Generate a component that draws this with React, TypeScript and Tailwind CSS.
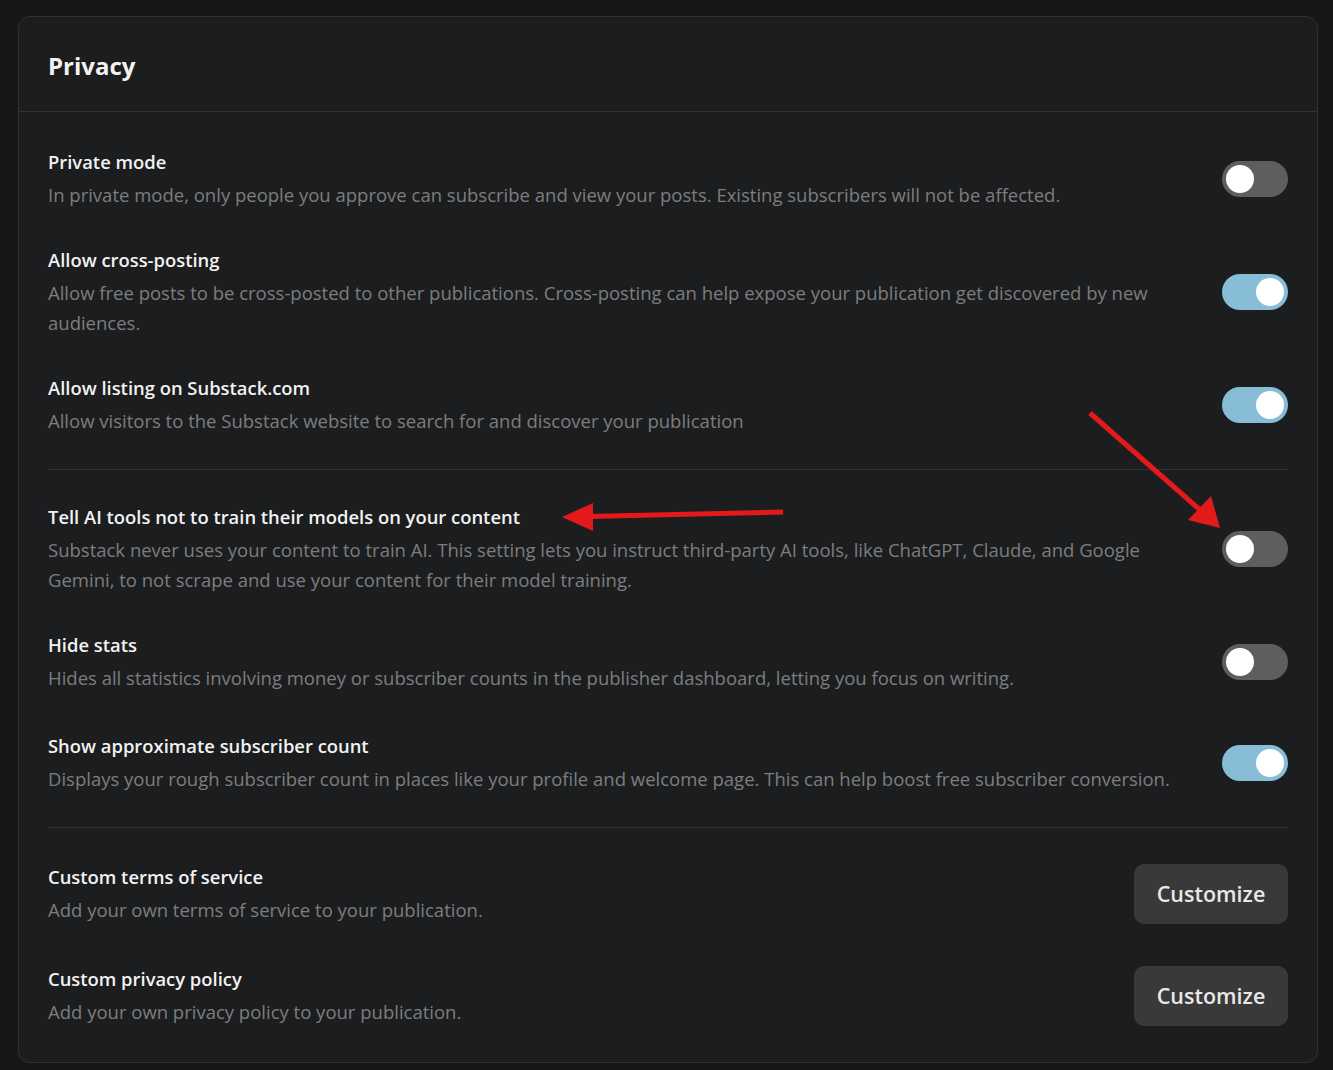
import React from "react";

type RowProps = {
  title: string;
  desc: string;
  control: React.ReactNode;
  extra?: string;
};

function Toggle({ on }: { on: boolean }) {
  return (
    <div
      className={
        on
          ? "relative h-[36px] w-[66px] shrink-0 rounded-full bg-[#87bdd6]"
          : "relative h-[36px] w-[66px] shrink-0 rounded-full bg-[#5d5e5d]"
      }
    >
      <div
        className={
          on
            ? "absolute right-[4px] top-[4px] h-[28px] w-[28px] rounded-full bg-white"
            : "absolute left-[4px] top-[4px] h-[28px] w-[28px] rounded-full bg-white"
        }
      />
    </div>
  );
}

function CustomizeButton() {
  return (
    <button className="h-[60px] w-[154px] shrink-0 rounded-[10px] bg-[#383938] text-[21.5px] font-semibold text-[#e8e8e8]">
      Customize
    </button>
  );
}

function Row({ title, desc, control, extra }: RowProps) {
  return (
    <div className={"flex items-center justify-between py-[18px] " + (extra ?? "")}>
      <div className="w-[1132px]">
        <div className="text-[18.4px] font-semibold leading-[28px] text-[#f2f2f2]">{title}</div>
        <div className="mt-[4px] text-[18.5px] leading-[30px] text-[#7c7d7e]">{desc}</div>
      </div>
      {control}
    </div>
  );
}

function Divider() {
  return <div className="h-px bg-[#313234]" />;
}

export default function App() {
  return (
    <div
      className="relative min-h-[1070px] w-[1333px] bg-[#161719] pl-[18px] pt-[16px]"
      style={{ fontFamily: '"Open Sans", "Noto Sans", sans-serif' }}
    >
      <div className="w-[1300px] rounded-[12px] border border-[#303133] bg-[#1c1d1f]">
        <div className="flex h-[95px] items-center border-b border-[#313234] px-[29px] pt-[4px]">
          <h1 className="text-[24px] font-bold text-[#f2f2f2]">Privacy</h1>
        </div>
        <div className="px-[29px] pb-[17px] pt-[18px]">
          <Row
            title="Private mode"
            desc="In private mode, only people you approve can subscribe and view your posts. Existing subscribers will not be affected."
            control={<Toggle on={false} />}
          />
          <Row
            title="Allow cross-posting"
            desc="Allow free posts to be cross-posted to other publications. Cross-posting can help expose your publication get discovered by new audiences."
            control={<Toggle on={true} />}
          />
          <Row
            title="Allow listing on Substack.com"
            desc="Allow visitors to the Substack website to search for and discover your publication"
            control={<Toggle on={true} />}
          />
          <div className="my-[15px]">
            <Divider />
          </div>
          <Row
            title="Tell AI tools not to train their models on your content"
            desc="Substack never uses your content to train AI. This setting lets you instruct third-party AI tools, like ChatGPT, Claude, and Google Gemini, to not scrape and use your content for their model training."
            control={<Toggle on={false} />}
          />
          <Row
            title="Hide stats"
            desc="Hides all statistics involving money or subscriber counts in the publisher dashboard, letting you focus on writing."
            control={<Toggle on={false} />}
          />
          <Row
            title="Show approximate subscriber count"
            desc="Displays your rough subscriber count in places like your profile and welcome page. This can help boost free subscriber conversion."
            control={<Toggle on={true} />}
            extra="mt-[3px]"
          />
          <div className="mb-[17px] mt-[15px]">
            <Divider />
          </div>
          <Row
            title="Custom terms of service"
            desc="Add your own terms of service to your publication."
            control={<CustomizeButton />}
          />
          <Row
            title="Custom privacy policy"
            desc="Add your own privacy policy to your publication."
            control={<CustomizeButton />}
            extra="mt-[4px]"
          />
        </div>
      </div>
      <svg
        className="pointer-events-none absolute left-0 top-0"
        width="1333"
        height="1070"
        viewBox="0 0 1333 1070"
      >
        <line x1="783" y1="512" x2="588" y2="516.5" stroke="#e4191b" strokeWidth="5" />
        <polygon points="562,517 593,503 593,531" fill="#e4191b" />
        <line x1="1090" y1="413" x2="1200" y2="510" stroke="#e4191b" strokeWidth="5" />
        <polygon points="1220,528 1188,520 1211,496" fill="#e4191b" />
      </svg>
    </div>
  );
}
